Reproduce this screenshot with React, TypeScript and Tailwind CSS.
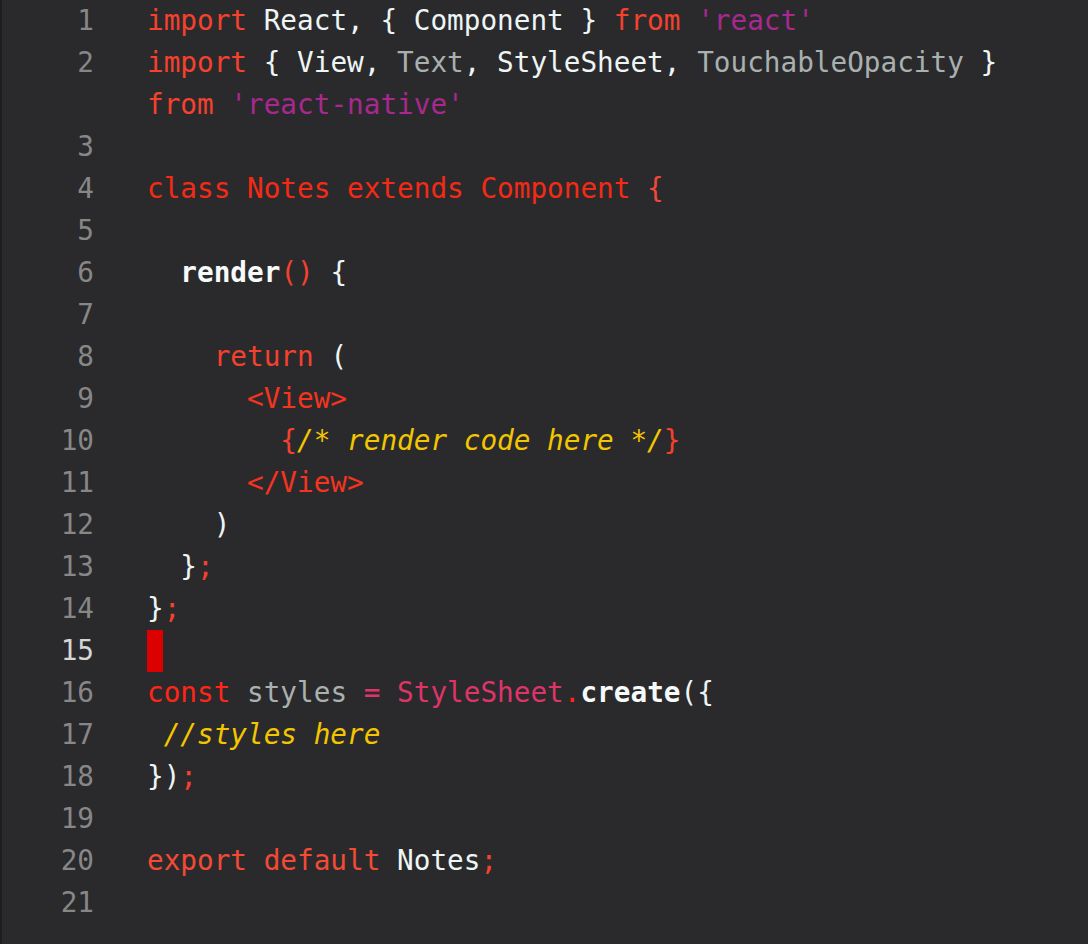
type Tok = [string, string];

const kw = 'text-[#f5412d]';
const kw2 = 'text-[#f42a16]';
const str = 'text-[#a8288f]';
const dim = 'text-[#a9b0b0]';
const txt = 'text-[#eef5f5]';
const pink = 'text-[#df3468]';
const cmt = 'text-[#f3c600] italic';
const bold = 'text-[#f7fafa] font-bold';

const rows: { n?: number; toks: Tok[]; cursor?: boolean }[] = [
  {
    n: 1,
    toks: [
      ['import', kw],
      [' React, { Component } ', txt],
      ['from', kw],
      [' ', txt],
      ["'react'", str],
    ],
  },
  {
    n: 2,
    toks: [
      ['import', kw],
      [' { View, ', txt],
      ['Text', dim],
      [', StyleSheet, ', txt],
      ['TouchableOpacity', dim],
      [' }', txt],
    ],
  },
  { toks: [['from', kw], [' ', txt], ["'react-native'", str]] },
  { n: 3, toks: [] },
  { n: 4, toks: [['class Notes extends Component ', kw2], ['{', 'text-[#f0493a]']] },
  { n: 5, toks: [] },
  { n: 6, toks: [['  ', txt], ['render', bold], ['()', kw], [' {', txt]] },
  { n: 7, toks: [] },
  { n: 8, toks: [['    ', txt], ['return', kw], [' (', txt]] },
  { n: 9, toks: [['      <View>', 'text-[#f5341f]']] },
  { n: 10, toks: [['        {', kw], ['/* render code here */', cmt], ['}', kw]] },
  { n: 11, toks: [['      </View>', 'text-[#f5341f]']] },
  { n: 12, toks: [['    )', txt]] },
  { n: 13, toks: [['  }', txt], [';', kw]] },
  { n: 14, toks: [['}', txt], [';', kw]] },
  { n: 15, toks: [], cursor: true },
  {
    n: 16,
    toks: [
      ['const', 'text-[#ff2616]'],
      [' ', txt],
      ['styles', dim],
      [' ', txt],
      ['=', pink],
      [' ', txt],
      ['StyleSheet', pink],
      ['.', 'text-[#ff2616]'],
      ['create', bold],
      ['({', txt],
    ],
  },
  { n: 17, toks: [[' //styles here', cmt]] },
  { n: 18, toks: [['})', txt], [';', kw]] },
  { n: 19, toks: [] },
  { n: 20, toks: [['export default', 'text-[#f24a35]'], [' Notes', txt], [';', kw]] },
  { n: 21, toks: [] },
];

export default function App() {
  return (
    <div className="min-h-[944px] w-[1088px] border-l-2 border-[#1c1d1e] bg-[#2a2a2c] font-['DejaVu_Sans_Mono',monospace] text-[27.7px] leading-[42px]">
      {rows.map((row, i) => (
        <div key={i} className="flex h-[42px]">
          <div
            className={
              'w-[92px] shrink-0 text-right ' +
              (row.cursor ? 'text-[#d6d6d6]' : 'text-[#878787]')
            }
          >
            {row.n ?? ''}
          </div>
          <div className="flex-1 pl-[53px] whitespace-pre">
            {row.cursor && <span className="inline-block h-[42px] w-[16px] bg-[#dd0000] align-top" />}
            {row.toks.map(([t, c], j) => (
              <span key={j} className={c}>
                {t}
              </span>
            ))}
          </div>
        </div>
      ))}
    </div>
  );
}
